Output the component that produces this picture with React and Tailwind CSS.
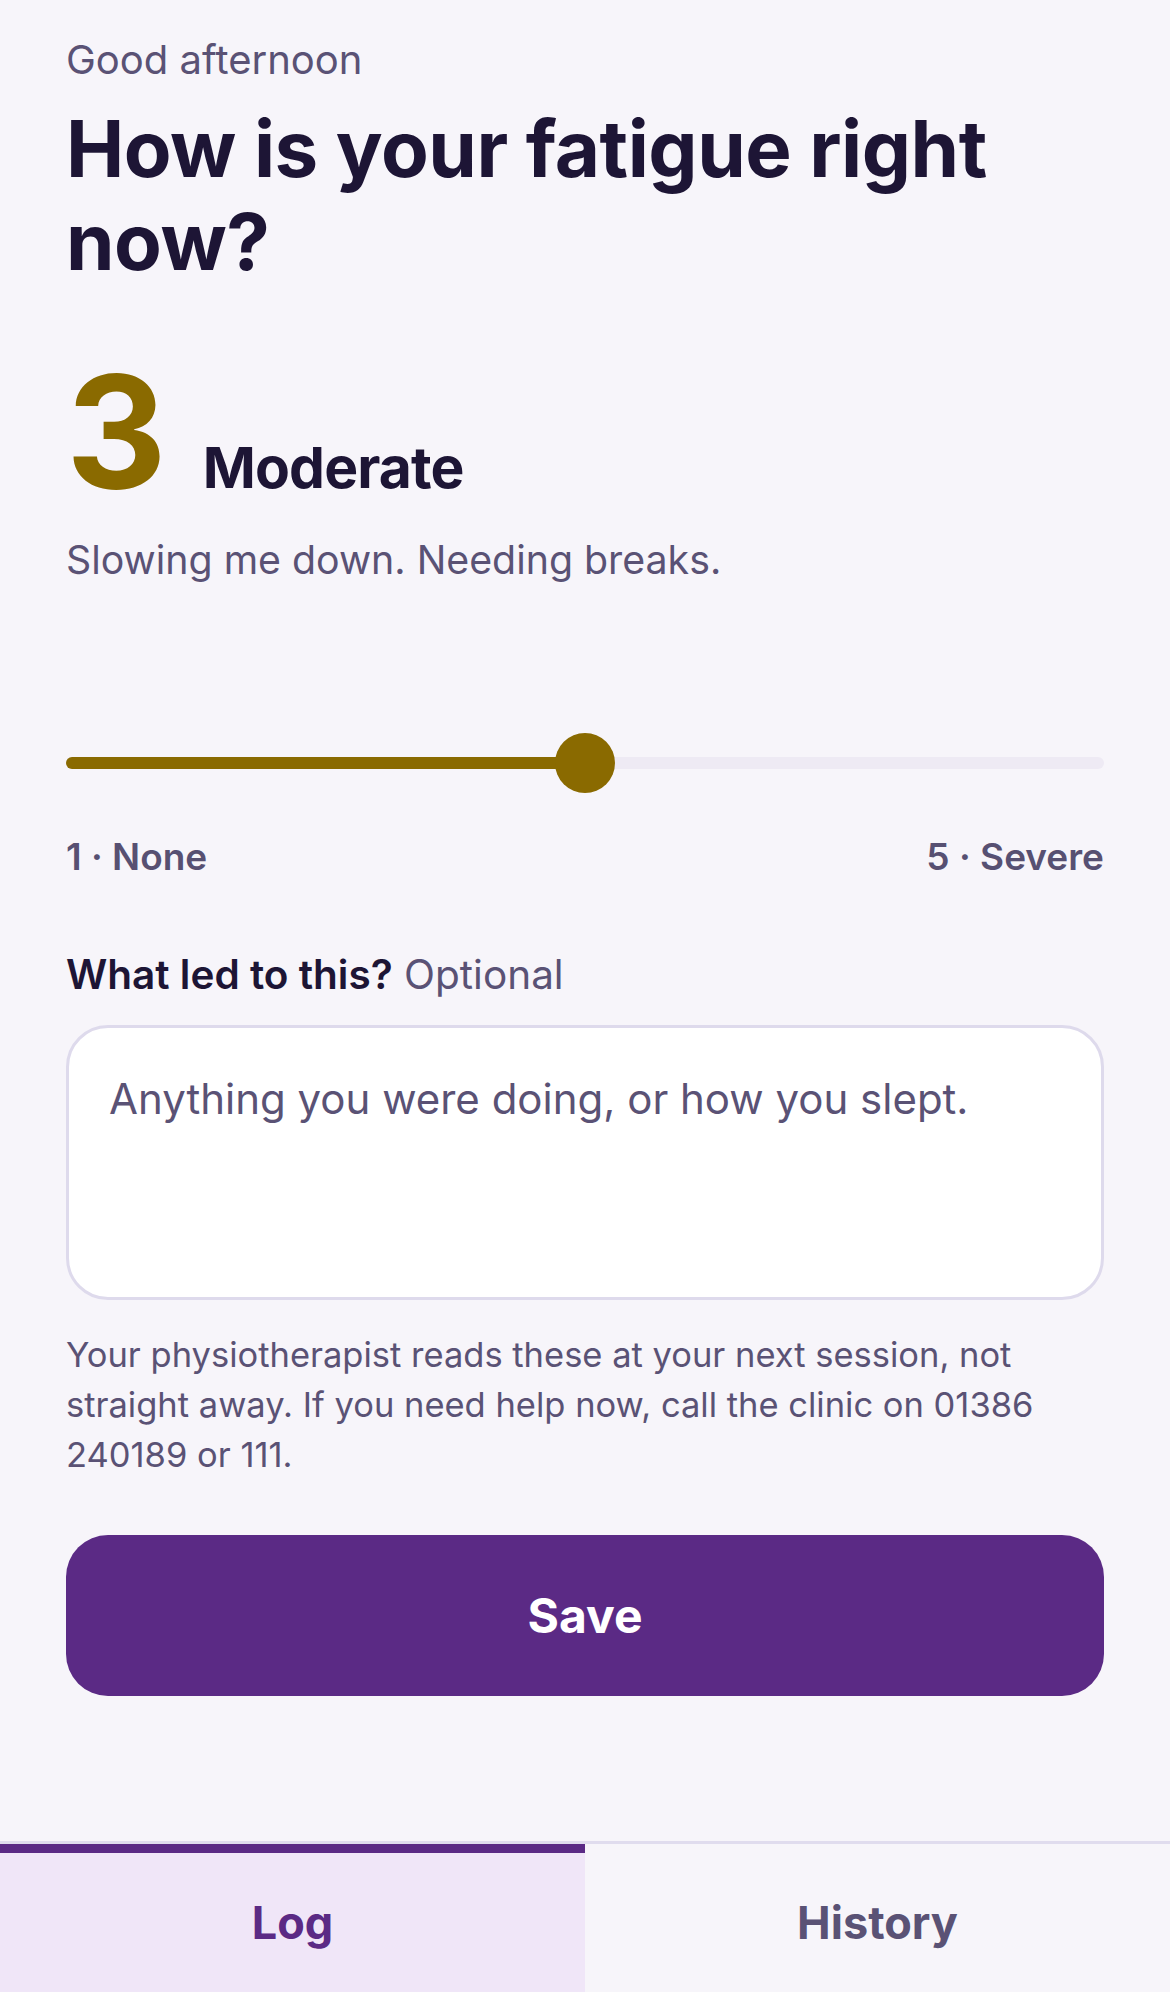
import React from "react";

export default function App() {
  return (
    <div
      className="min-h-screen flex flex-col bg-[#F7F5FA] text-[#1D1535]"
      style={{ fontFamily: "Inter, 'Noto Sans', sans-serif" }}
    >
      <main className="flex-1 px-[66px] pt-[30px]">
        <p className="text-[40px] leading-[60px] text-[#5A5275]">Good afternoon</p>
        <h1 className="mt-[12px] text-[78px] leading-[93px] font-bold tracking-[-0.006em] text-[#1D1535]">
          How is your fatigue right now?
        </h1>

        <div className="mt-[66px] flex items-baseline gap-[36px]">
          <span className="text-[156px] leading-none font-bold text-[#8A6A00]">3</span>
          <span className="text-[57px] leading-[72px] font-bold tracking-[-0.015em] text-[#1D1535]">Moderate</span>
        </div>

        <p className="mt-[20px] text-[39.3px] leading-[60px] text-[#5A5275]">
          Slowing me down. Needing breaks.
        </p>

        <div className="mt-[143px] relative h-[60px] flex items-center">
          <div className="w-full h-[12px] rounded-full bg-[#EEEAF4]" />
          <div className="absolute left-0 top-1/2 -translate-y-1/2 h-[12px] w-1/2 rounded-full bg-[#8A6A00]" />
          <div className="absolute left-1/2 top-0 -translate-x-1/2 w-[60px] h-[60px] rounded-full bg-[#8A6A00]" />
        </div>

        <div className="mt-[37px] flex justify-between text-[37px] leading-[54px] font-semibold text-[#575072]">
          <span>1 · None</span>
          <span>5 · Severe</span>
        </div>

        <p className="mt-[61px] text-[40.5px] leading-[60px]">
          <span className="font-semibold text-[#1D1535]">What led to this?</span>{" "}
          <span className="text-[#5A5275]">Optional</span>
        </p>

        <textarea
          className="mt-[20px] block w-full h-[275px] resize-none rounded-[42px] border-[3px] border-[#DEDAEC] bg-white px-[40px] py-[39px] text-[42px] leading-[63px] text-[#1D1535] placeholder:text-[#5A5275] outline-none"
          placeholder="Anything you were doing, or how you slept."
        />

        <p className="mt-[30px] text-[34.5px] leading-[50px] text-[#5A5275]">
          Your physiotherapist reads these at your next session, not straight away. If you need help now, call the clinic on 01386 240189 or 111.
        </p>

        <button className="mt-[55px] w-full h-[161px] rounded-[42px] bg-[#5B2A85] text-white text-[48px] font-bold">
          Save
        </button>
      </main>

      <nav className="grid grid-cols-2 h-[151px] border-t-[3px] border-[#E0DCEE]">
        <div className="flex items-center justify-center bg-[#F0E6F8] border-t-[9px] border-[#5B2A85] text-[45px] font-bold text-[#5B2A85]">
          Log
        </div>
        <div className="flex items-center justify-center border-t-[9px] border-transparent text-[45px] font-bold text-[#5A5275]">
          History
        </div>
      </nav>
    </div>
  );
}
